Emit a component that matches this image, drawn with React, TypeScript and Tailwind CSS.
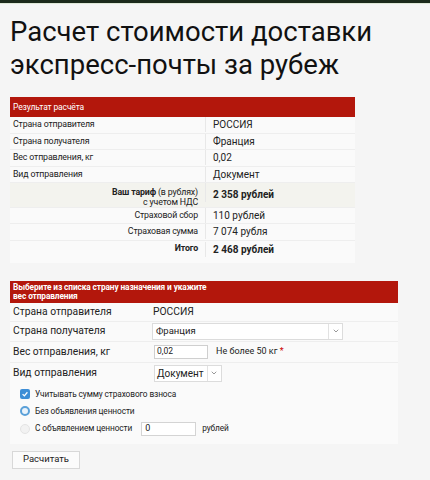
import { ChevronDown } from 'lucide-react';

const resultRows = [
  { label: 'Страна отправителя', value: 'РОССИЯ' },
  { label: 'Страна получателя', value: 'Франция' },
  { label: 'Вес отправления, кг', value: '0,02' },
  { label: 'Вид отправления', value: 'Документ' },
];

function Arrow() {
  return (
    <span className="flex h-full w-[14px] items-center justify-center border-l border-[#e2e2e2] text-[#999]">
      <ChevronDown className="h-[8px] w-[8px]" strokeWidth={3} />
    </span>
  );
}

export default function App() {
  return (
    <div
      className="relative h-[480px] w-[430px] overflow-hidden bg-[#f5f5f5] text-[#222]"
      style={{ fontFamily: 'Roboto, "Liberation Sans", sans-serif' }}
    >
      <div className="h-[3px] bg-[#1c2a1c]" />
      <div className="h-[1px] bg-[#dfe8d8]" />

      <h1 className="ml-[10px] mt-[11px] text-[27.5px] leading-[33px] text-[#111]">
        Расчет стоимости доставки
        <br />
        экспресс-почты за рубеж
      </h1>

      <div className="ml-[10px] mt-[16px] w-[345px] bg-[#fafafa] text-[8.8px] tracking-[-0.15px]">
        <div className="flex h-[20px] items-center bg-[#b3170c] px-[3px] text-[8.5px] text-white">
          Результат расчёта
        </div>
        {resultRows.map((r) => (
          <div key={r.label} className="flex h-[16.5px] items-center border-b border-[#eeeeee]">
            <div className="w-[195px] px-[3px]">{r.label}</div>
            <div className="flex-1 border-l border-[#e8e8e8] pl-[7px] text-[10px] tracking-normal">{r.value}</div>
          </div>
        ))}
        <div className="flex h-[25px] items-start border-b border-[#eeeeee] bg-[#f3f3ee]">
          <div className="w-[195px] pr-[7px] pt-[4px] text-right leading-[10px]">
            <b>Ваш тариф</b> (в рублях)
            <br />с учетом НДС
          </div>
          <div className="flex-1 border-l border-[#e8e8e8] pl-[7px] pt-[4px] text-[10px] font-bold tracking-normal">2 358 рублей</div>
        </div>
        <div className="flex h-[16px] items-center border-b border-[#eeeeee]">
          <div className="w-[195px] pr-[7px] text-right">Страховой сбор</div>
          <div className="flex-1 border-l border-[#e8e8e8] pl-[7px] text-[10px] tracking-normal">110 рублей</div>
        </div>
        <div className="flex h-[16.5px] items-center border-b border-[#eeeeee]">
          <div className="w-[195px] pr-[7px] text-right">Страховая сумма</div>
          <div className="flex-1 border-l border-[#e8e8e8] pl-[7px] text-[10px] tracking-normal">7 074 рубля</div>
        </div>
        <div className="flex h-[17px] items-center">
          <div className="w-[195px] pr-[7px] text-right font-bold">Итого</div>
          <div className="flex-1 border-l border-[#e8e8e8] pl-[7px] text-[10px] font-bold tracking-normal">2 468 рублей</div>
        </div>
        <div className="h-[5px]" />
      </div>

      <div className="ml-[10px] mt-[18px] w-[388px] bg-[#fafafa]">
        <div className="h-[22px] bg-[#b3170c] px-[3px] pt-[2px] text-[8.3px] font-bold leading-[9.5px] tracking-[-0.1px] text-white">
          Выберите из списка страну назначения и укажите
          <br />
          вес отправления
        </div>
        <div className="flex h-[19px] items-center border-b border-[#eeeeee] text-[10.3px]">
          <div className="w-[142px] px-[3px]">Страна отправителя</div>
          <div className="pl-[1px]">РОССИЯ</div>
        </div>
        <div className="flex h-[20px] items-center border-b border-[#eeeeee] text-[10.3px]">
          <div className="w-[142px] px-[3px]">Страна получателя</div>
          <div className="flex h-[17px] w-[191px] items-center border border-[#dcdcdc] bg-white text-[9.5px]">
            <span className="flex-1 pl-[3px]">Франция</span>
            <Arrow />
          </div>
        </div>
        <div className="flex h-[21px] items-center border-b border-[#eeeeee] text-[10.3px]">
          <div className="w-[142px] px-[3px]">Вес отправления, кг</div>
          <div className="ml-[2px] flex h-[14px] w-[54px] items-center border border-[#cfcfcf] bg-white pl-[2px] text-[8.5px]">
            0,02
          </div>
          <div className="ml-[8px] text-[9px]">
            Не более 50 кг <span className="text-[#c00]">*</span>
          </div>
        </div>
        <div className="flex h-[21px] items-center text-[10.3px]">
          <div className="w-[142px] px-[3px]">Вид отправления</div>
          <div className="ml-[2px] flex h-[17px] items-center border border-[#dcdcdc] bg-white text-[10px]">
            <span className="pl-[2px] pr-[3px]">Документ</span>
            <Arrow />
          </div>
        </div>
        <div className="pb-[6px] pl-[10px] pt-[2px] text-[8.3px] tracking-[-0.1px]">
          <div className="flex h-[17px] items-center gap-[5px]">
            <span className="flex h-[10px] w-[10px] items-center justify-center rounded-[2px] bg-[#3e8ed6]">
              <svg viewBox="0 0 10 10" className="h-[8px] w-[8px]">
                <path d="M2 5.2 L4.2 7.3 L8 2.8" stroke="white" strokeWidth="1.6" fill="none" />
              </svg>
            </span>
            Учитывать сумму страхового взноса
          </div>
          <div className="flex h-[17px] items-center gap-[5px]">
            <span className="h-[10px] w-[10px] rounded-full border-[2.5px] border-[#5aa0d8] bg-[#eaf3fb]" />
            Без объявления ценности
          </div>
          <div className="flex h-[18px] items-center gap-[5px]">
            <span className="h-[10px] w-[10px] rounded-full border border-[#e4e4e4] bg-[#f2f2f2]" />
            С объявлением ценности
            <span className="ml-[4px] flex h-[14px] w-[55px] items-center border border-[#d4d4d4] bg-white pl-[3px] text-[9px]">
              0
            </span>
            <span className="ml-[1px]">рублей</span>
          </div>
        </div>
      </div>

      <button className="ml-[12px] mt-[7px] h-[18px] w-[68px] border border-[#d8d8d8] bg-[#fbfbfb] text-[9.5px] text-[#222]">
        Расчитать
      </button>
    </div>
  );
}
